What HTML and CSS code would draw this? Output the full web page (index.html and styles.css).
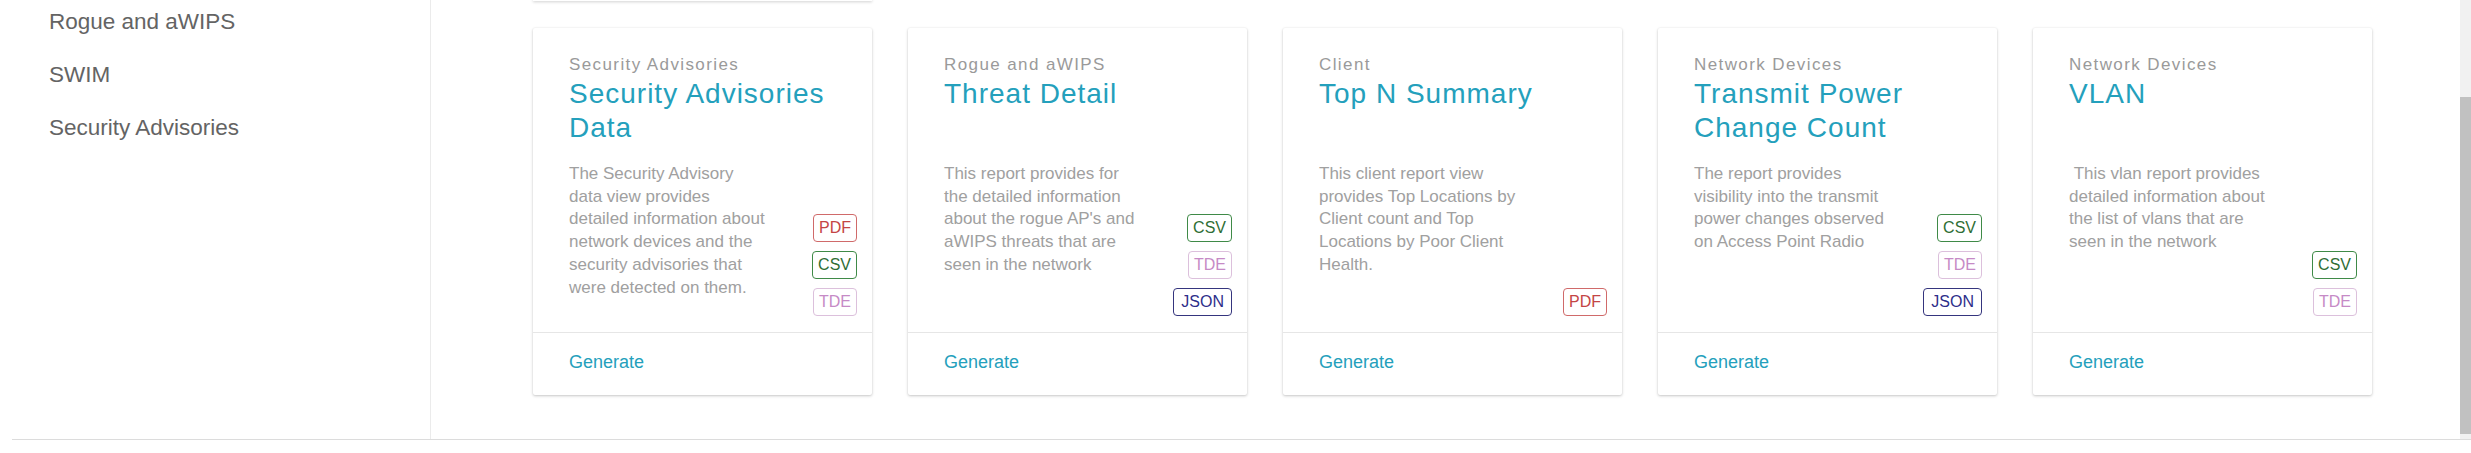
FILE: index.html
```html
<!DOCTYPE html>
<html lang="en">
<head>
<meta charset="utf-8">
<title>Reports</title>
<link rel="stylesheet" href="styles.css">
</head>
<body>
<div class="page">
  <aside class="sidebar">
    <ul class="nav">
      <li class="nav-item">Rogue and aWIPS</li>
      <li class="nav-item">SWIM</li>
      <li class="nav-item">Security Advisories</li>
    </ul>
  </aside>
  <main class="main">
    <div class="peek"></div>
    <div class="grid">
      <article class="card">
        <div class="card-head">
          <div class="category">Security Advisories</div>
          <h2 class="title">Security Advisories Data</h2>
        </div>
        <div class="card-body">
          <p class="desc">The Security Advisory data view provides detailed information about network devices and the security advisories that were detected on them.</p>
          <div class="formats">
            <span class="badge pdf">PDF</span>
            <span class="badge csv">CSV</span>
            <span class="badge tde">TDE</span>
          </div>
        </div>
        <div class="card-foot"><a class="generate">Generate</a></div>
      </article>
      <article class="card">
        <div class="card-head">
          <div class="category">Rogue and aWIPS</div>
          <h2 class="title">Threat Detail</h2>
        </div>
        <div class="card-body">
          <p class="desc">This report provides for the detailed information about the rogue AP's and aWIPS threats that are seen in the network</p>
          <div class="formats">
            <span class="badge csv">CSV</span>
            <span class="badge tde">TDE</span>
            <span class="badge json">JSON</span>
          </div>
        </div>
        <div class="card-foot"><a class="generate">Generate</a></div>
      </article>
      <article class="card">
        <div class="card-head">
          <div class="category">Client</div>
          <h2 class="title">Top N Summary</h2>
        </div>
        <div class="card-body">
          <p class="desc">This client report view provides Top Locations by Client count and Top Locations by Poor Client Health.</p>
          <div class="formats">
            <span class="badge pdf">PDF</span>
          </div>
        </div>
        <div class="card-foot"><a class="generate">Generate</a></div>
      </article>
      <article class="card">
        <div class="card-head">
          <div class="category">Network Devices</div>
          <h2 class="title">Transmit Power Change Count</h2>
        </div>
        <div class="card-body">
          <p class="desc">The report provides visibility into the transmit power changes observed on Access Point Radio</p>
          <div class="formats">
            <span class="badge csv">CSV</span>
            <span class="badge tde">TDE</span>
            <span class="badge json">JSON</span>
          </div>
        </div>
        <div class="card-foot"><a class="generate">Generate</a></div>
      </article>
      <article class="card">
        <div class="card-head">
          <div class="category">Network Devices</div>
          <h2 class="title">VLAN</h2>
        </div>
        <div class="card-body">
          <p class="desc">&nbsp;This vlan report provides detailed information about the list of vlans that are seen in the network</p>
          <div class="formats">
            <span class="badge csv">CSV</span>
            <span class="badge tde">TDE</span>
          </div>
        </div>
        <div class="card-foot"><a class="generate">Generate</a></div>
      </article>
    </div>
  </main>
  <div class="scrollbar"><div class="thumb"></div></div>
</div>
</body>
</html>
```

FILE: styles.css
```css
* { box-sizing: border-box; }

html, body {
  margin: 0;
  padding: 0;
  background: #fff;
  font-family: "Liberation Sans", Arial, sans-serif;
}

.page {
  display: flex;
  height: 440px;
  margin-left: 12px;
  border-bottom: 1px solid #dcdcdc;
}

.sidebar {
  width: 419px;
  flex: none;
  border-right: 1px solid #ebebeb;
}

.nav {
  list-style: none;
  margin: 0;
  padding: 8px 0 0 37px;
}

.nav-item {
  font-size: 22.5px;
  line-height: 28px;
  color: #646464;
  margin-bottom: 25px;
}

.main {
  flex: 1;
  overflow: hidden;
  padding-left: 102px;
}

.peek {
  width: 339px;
  height: 2px;
  margin-top: -1px;
  background: #fff;
  box-shadow: 0 1px 3px rgba(0, 0, 0, 0.22);
}

.grid {
  display: grid;
  grid-template-columns: repeat(5, 339px);
  column-gap: 36px;
  margin-top: 27px;
}

.card {
  display: flex;
  flex-direction: column;
  background: #fff;
  border-radius: 2px;
  box-shadow: 0 1px 3px rgba(0, 0, 0, 0.22), 0 0 2px rgba(0, 0, 0, 0.06);
}

.card-head {
  padding: 27px 15px 0 36px;
}

.category {
  font-size: 17px;
  line-height: 20px;
  letter-spacing: 1.4px;
  color: #9a9a9a;
}

.title {
  margin: 2px 0 0;
  min-height: 68px;
  font-size: 28px;
  font-weight: normal;
  line-height: 34px;
  letter-spacing: 1px;
  color: #24a0bc;
}

.card-body {
  display: flex;
  justify-content: space-between;
  align-items: flex-end;
  min-height: 187px;
  padding: 18px 15px 16px 36px;
}

.desc {
  align-self: flex-start;
  width: 200px;
  margin: 0;
  font-size: 17px;
  line-height: 22.7px;
  color: #a0a0a0;
}

.formats {
  display: flex;
  flex-direction: column;
  align-items: flex-end;
  gap: 9px;
}

.badge {
  display: block;
  height: 28px;
  padding: 0 5px;
  border: 1px solid;
  border-radius: 4px;
  font-size: 16px;
  line-height: 26px;
}

.pdf { color: #c44545; border-color: #d06a6a; }
.csv { color: #2f6e35; border-color: #3f8a47; }
.tde { color: #c68ac6; border-color: #dcc0dc; }
.json { color: #2e2e8a; border-color: #35357e; padding: 0 7px; }

.card-foot {
  border-top: 1px solid #e6e6e6;
  padding: 18px 36px 22px;
  font-size: 18px;
  line-height: 22px;
}

.generate {
  color: #24a0bc;
  text-decoration: none;
}

.scrollbar {
  width: 11px;
  flex: none;
  background: #f1f1f1;
  padding-top: 97px;
  padding-bottom: 5px;
}

.thumb {
  height: 100%;
  background: #c1c1c1;
}
```
